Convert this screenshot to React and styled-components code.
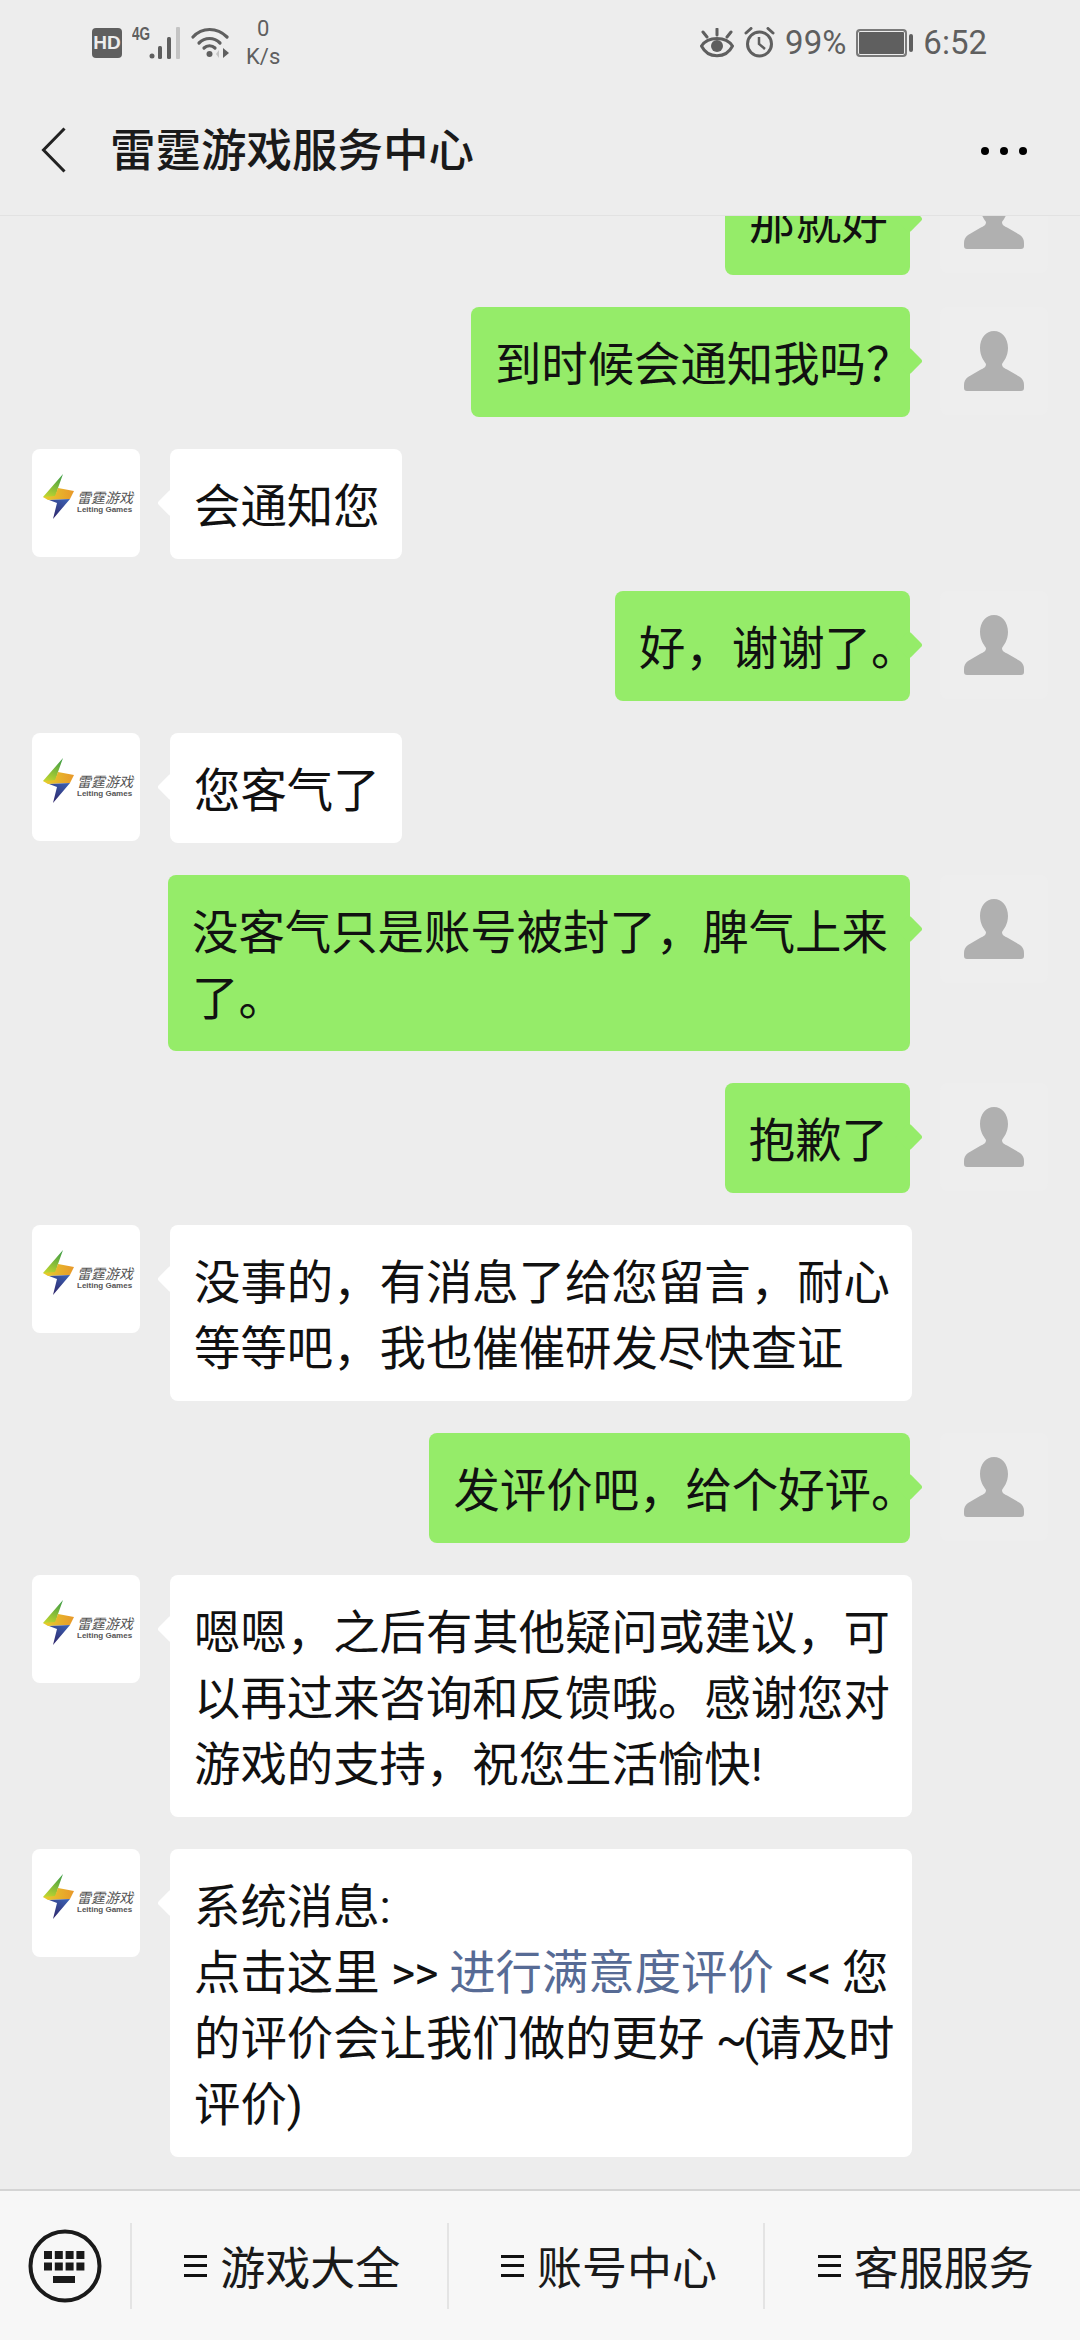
import React from 'react'
import styled, { createGlobalStyle } from 'styled-components'

const GlobalStyle = createGlobalStyle`
  html, body {
    margin: 0;
    padding: 0;
    background: #ededed;
  }
  * {
    box-sizing: border-box;
  }
`

const Bolt = () => (
  <svg width="31" height="46" viewBox="0 0 31 46">
    <defs>
      <linearGradient id="boltGreen" x1="0.7" y1="0" x2="0.4" y2="1">
        <stop offset="0" stopColor="#3f9e45" />
        <stop offset="1" stopColor="#c2d62f" />
      </linearGradient>
      <linearGradient id="boltBand" x1="0" y1="0" x2="1" y2="0">
        <stop offset="0" stopColor="#e6cf2c" />
        <stop offset="1" stopColor="#e8982a" />
      </linearGradient>
      <linearGradient id="boltBlue" x1="0.8" y1="0" x2="0.2" y2="1">
        <stop offset="0" stopColor="#3a5fb0" />
        <stop offset="1" stopColor="#2f2468" />
      </linearGradient>
    </defs>
    <path d="M20 0 L0 23 L12 25 L15 14 Z" fill="url(#boltGreen)" />
    <path d="M15 14 L31 17 L27 25 L5 26 L0 23 L12 22 Z" fill="url(#boltBand)" />
    <path d="M6 26 L27 25 L10 45 L14 29 Z" fill="url(#boltBlue)" />
  </svg>
)

const Person = () => (
  <svg width="60" height="60" viewBox="0 0 60 60">
    <path
      fill="#b0b0b0"
      d="M30 0 C38 0 44 7 44 17 C44 25 40 30 38 33 C38 36 40 37 44 39 L56 46 C59 48 60 51 60 54 V57 Q60 60 57 60 H3 Q0 60 0 57 V54 C0 51 1 48 4 46 L16 39 C20 37 22 36 22 33 C20 30 16 25 16 17 C16 7 22 0 30 0 Z"
    />
  </svg>
)

const KeyboardIcon = () => (
  <svg width="74" height="74" viewBox="0 0 74 74">
    <circle cx="37" cy="37" r="34.5" fill="none" stroke="#1a1a1a" strokeWidth="4" />
    {[0, 1].map(r =>
      [0, 1, 2, 3].map(c => (
        <rect key={`${r}-${c}`} x={16 + c * 10.8} y={22 + r * 11.5} width="8" height="8" fill="#1a1a1a" />
      ))
    )}
    <rect x="25" y="47" width="22" height="7" fill="#1a1a1a" />
  </svg>
)

const Msg = ({ self, children }) => (
  <Row $self={self}>
    {self ? (
      <SelfAvatar><Person /></SelfAvatar>
    ) : (
      <LogoAvatar>
        <Bolt />
        <LogoText>
          <LogoCn>雷霆游戏</LogoCn>
          <LogoEn>Leiting Games</LogoEn>
        </LogoText>
      </LogoAvatar>
    )}
    <Bubble $self={self}>{children}</Bubble>
  </Row>
)

export default function App() {
  return (
    <Page>
      <GlobalStyle />
      <StatusBar>
        <StatusGroup>
          <HdBadge>HD</HdBadge>
          <SignalWrap>
            <NetLabel>4G</NetLabel>
            <svg width="32" height="32" viewBox="0 0 32 32">
              <circle cx="3" cy="29" r="2.5" fill="#5f5f5f" />
              <rect x="9" y="19" width="4" height="13" rx="1.5" fill="#5f5f5f" />
              <rect x="18" y="10" width="4" height="22" rx="1.5" fill="#5f5f5f" />
              <rect x="27" y="0" width="4" height="32" rx="1" fill="#c4c4c4" />
            </svg>
          </SignalWrap>
          <svg width="38" height="31" viewBox="0 0 38 31">
            <g fill="none" stroke="#5f5f5f" strokeWidth="3.2" strokeLinecap="round">
              <path d="M2 10 C11 0 26 0 36 10" />
              <path d="M8 16 C14 10 23 10 29 16" />
              <path d="M13 21 C16 18 21 18 24 21" />
            </g>
            <circle cx="18.500" cy="27" r="3" fill="#5f5f5f" />
            <path d="M32 21 L38 26 L32 31 Z" fill="#5f5f5f" />
            <path d="M28 23 L25 27 L28 31 Z" fill="#c4c4c4" />
          </svg>
          <Speed>
            <span>0</span>
            <span>K/s</span>
          </Speed>
        </StatusGroup>
        <StatusGroup>
          <svg width="34" height="30" viewBox="0 0 34 30">
            <path d="M1.500 18 C8 8 26 8 32.500 18 C26 31 8 31 1.500 18 Z" fill="none" stroke="#5f5f5f" strokeWidth="3" />
            <circle cx="17" cy="18" r="6" fill="#5f5f5f" />
            <path d="M17 1 V7 M3 4 L7 9 M31 4 L27 9" stroke="#5f5f5f" strokeWidth="3" strokeLinecap="round" />
          </svg>
          <svg width="31" height="31" viewBox="0 0 31 31">
            <circle cx="15.500" cy="17" r="12" fill="none" stroke="#5f5f5f" strokeWidth="3" />
            <path d="M15 10 V17 L21 22" fill="none" stroke="#5f5f5f" strokeWidth="2.500" />
            <path d="M2 6 L7 1.500 M29 6 L24 1.500" stroke="#5f5f5f" strokeWidth="3" strokeLinecap="round" />
          </svg>
          <StatusText>99%</StatusText>
          <Battery>
            <BatteryFill />
            <BatteryCap />
          </Battery>
          <StatusText>6:52</StatusText>
        </StatusGroup>
      </StatusBar>

      <NavBar>
        <svg width="25" height="46" viewBox="0 0 25 46">
          <path d="M23.500 1.500 L2.500 23 L23.500 44.500" fill="none" stroke="#222" strokeWidth="3" />
        </svg>
        <Title>雷霆游戏服务中心</Title>
        <Dots>
          <i /><i /><i />
        </Dots>
      </NavBar>

      <ChatList>
        <Msg self>那就好</Msg>
        <Msg self>到时候会通知我吗<Trim $w={22}>？</Trim></Msg>
        <Msg>会通知您</Msg>
        <Msg self>好，谢谢了<Trim $w={17}>。</Trim></Msg>
        <Msg>您客气了</Msg>
        <Msg self>没客气只是账号被封了，脾气上来了。</Msg>
        <Msg self>抱歉了</Msg>
        <Msg>没事的，有消息了给您留言，耐心等等吧，我也催催研发尽快查证</Msg>
        <Msg self>发评价吧，给个好评<Trim $w={17}>。</Trim></Msg>
        <Msg>嗯嗯，之后有其他疑问或建议，可以再过来咨询和反馈哦。感谢您对游戏的支持，祝您生活愉快!</Msg>
        <Msg>
          <Line>系统消息:</Line>
          <Line>点击这里 <Tight $ls={-1}>&gt;&gt;</Tight> <LinkText>进行满意度评价</LinkText> <Tight $ls={-1}>&lt;&lt;</Tight> 您</Line>
          <Line>的评价会让我们做的更好 <Tight $ls={-4}>~(</Tight>请及时</Line>
          <Line>评价)</Line>
        </Msg>
      </ChatList>

      <BottomBar>
        <KeyboardCell><KeyboardIcon /></KeyboardCell>
        <Tab><Burger /><span>游戏大全</span></Tab>
        <Tab><Burger /><span>账号中心</span></Tab>
        <Tab><Burger /><span>客服服务</span></Tab>
      </BottomBar>
    </Page>
  )
}

const Page = styled.div`
  width: 1080px;
  height: 2340px;
  display: flex;
  flex-direction: column;
  overflow: hidden;
  background: #ededed;
  font-family: Roboto, "Noto Sans CJK SC", sans-serif;
  color: #111;
`

const StatusBar = styled.div`
  height: 85px;
  flex: none;
  display: flex;
  align-items: center;
  justify-content: space-between;
  padding: 0 93px 0 92px;
  color: #5f5f5f;
`

const StatusGroup = styled.div`
  display: flex;
  align-items: center;
  gap: 10px;
`

const HdBadge = styled.div`
  width: 30px;
  height: 30px;
  border-radius: 4px;
  background: #5f5f5f;
  color: #ededed;
  font: 700 19px/30px "Liberation Sans", sans-serif;
  text-align: center;
`

const SignalWrap = styled.div`
  position: relative;
  width: 49px;
  height: 32px;
  display: flex;
  justify-content: flex-end;
`

const NetLabel = styled.span`
  position: absolute;
  left: 0;
  top: -2px;
  font: 700 18px/18px "Liberation Sans", sans-serif;
  transform: scaleX(0.75);
  transform-origin: left;
`

const Speed = styled.div`
  margin-left: 7px;
  display: flex;
  flex-direction: column;
  align-items: center;
  font-size: 22px;
  line-height: 28px;
`

const StatusText = styled.span`
  font-size: 33px;
  line-height: 40px;
  color: #5f5f5f;
`

const Battery = styled.div`
  width: 57px;
  height: 28px;
  display: flex;
  align-items: center;
  gap: 2px;
`

const BatteryFill = styled.div`
  width: 51px;
  height: 28px;
  border: 2px solid #7a7a7a;
  border-radius: 4px;
  background: #5f5f5f;
  box-shadow: inset 0 0 0 1px #ededed;
`

const BatteryCap = styled.div`
  width: 4px;
  height: 18px;
  border-radius: 2px;
  background: #5f5f5f;
`

const NavBar = styled.div`
  height: 131px;
  flex: none;
  display: flex;
  align-items: center;
  padding: 0 53px 0 41px;
  border-bottom: 1px solid #e2e2e2;
`

const Title = styled.div`
  flex: 1;
  margin: -6px 0 0 44px;
  font-size: 45.500px;
  font-weight: 500;
  color: #1a1a1a;
`

const Dots = styled.div`
  display: flex;
  gap: 11px;
  margin-top: 2px;

  i {
    width: 8px;
    height: 8px;
    border-radius: 50%;
    background: #000;
  }
`

const ChatList = styled.div`
  flex: 1;
  min-height: 0;
  overflow: hidden;
  display: flex;
  flex-direction: column;
  justify-content: flex-end;
  gap: 32px;
  padding: 0 32px 32px;
`

const Row = styled.div`
  flex: none;
  display: flex;
  flex-direction: ${p => (p.$self ? 'row-reverse' : 'row')};
  align-items: flex-start;
  gap: 30px;
`

const SelfAvatar = styled.div`
  width: 108px;
  height: 108px;
  flex: none;
  border-radius: 8px;
  background: #eeeeee;
  display: flex;
  align-items: center;
  justify-content: center;
`

const LogoAvatar = styled.div`
  width: 108px;
  height: 108px;
  flex: none;
  border-radius: 8px;
  background: #fff;
  display: flex;
  align-items: center;
  gap: 3px;
  padding: 0 0 12px 11px;
`

const LogoText = styled.div`
  display: flex;
  flex-direction: column;
  margin-top: 9px;
  color: #555;
`

const LogoCn = styled.span`
  font: italic 14px/15px "Noto Sans CJK SC", sans-serif;
`

const LogoEn = styled.span`
  font: 700 8px/9px "Liberation Sans", sans-serif;
  white-space: nowrap;
`

const Bubble = styled.div`
  position: relative;
  max-width: 742px;
  padding: 25px 22px 19px 24px;
  border-radius: 8px;
  background: ${p => (p.$self ? '#95ec69' : '#fff')};
  font-size: 46.400px;
  line-height: 66px;
  color: #111;

  &::after {
    content: '';
    position: absolute;
    top: 44px;
    ${p => (p.$self ? 'right: -9px;' : 'left: -9px;')}
    width: 20px;
    height: 20px;
    border-radius: 3px;
    background: inherit;
    transform: rotate(45deg);
  }
`

const Line = styled.div`
  white-space: nowrap;
`

const Trim = styled.span`
  display: inline-block;
  width: ${p => p.$w}px;
  white-space: nowrap;
`

const Tight = styled.span`
  letter-spacing: ${p => p.$ls}px;
`

const LinkText = styled.span`
  color: #576b95;
`

const BottomBar = styled.div`
  height: 151px;
  flex: none;
  display: grid;
  grid-template-columns: 130px repeat(3, 1fr);
  align-items: center;
  background: #f7f7f7;
  border-top: 2px solid #d4d4d4;
`

const KeyboardCell = styled.div`
  display: flex;
  align-items: center;
  justify-content: center;
`

const Tab = styled.div`
  height: 86px;
  display: flex;
  align-items: center;
  justify-content: center;
  gap: 13px;
  padding-left: 6px;
  border-left: 2px solid #e4e4e4;
  font-size: 45px;
  color: #1a1a1a;
`

const Burger = styled.span`
  width: 23px;
  height: 22px;
  border-top: 3px solid #111;
  border-bottom: 3px solid #111;
  display: flex;
  align-items: center;

  &::before {
    content: '';
    width: 100%;
    height: 3px;
    background: #111;
  }
`
